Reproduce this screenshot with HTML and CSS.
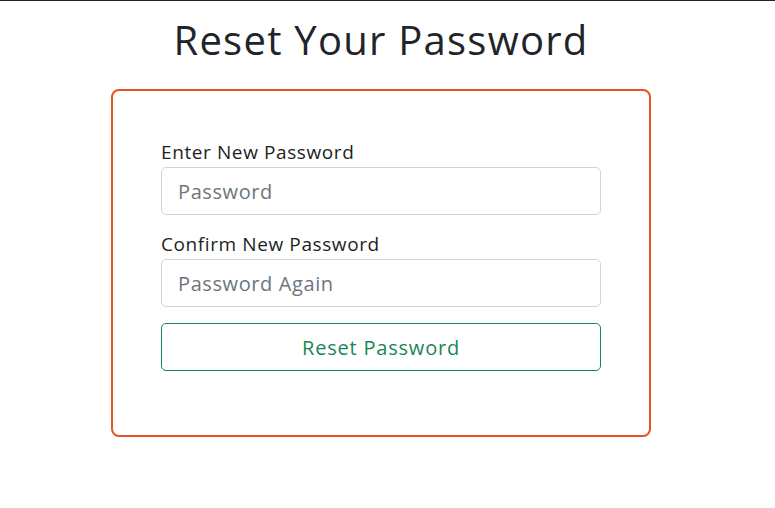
FILE: index.html
```html
<!DOCTYPE html>
<html>
<head>
<meta charset="utf-8">
<link rel="stylesheet" href="styles.css">
</head>
<body>
<div class="topline"></div>
<main class="wrap">
  <h1 class="title">Reset Your Password</h1>
  <form class="card">
    <label class="label" for="p1">Enter New Password</label>
    <input class="field" id="p1" type="password" placeholder="Password">
    <label class="label label-2" for="p2">Confirm New Password</label>
    <input class="field" id="p2" type="password" placeholder="Password Again">
    <button class="btn" type="button">Reset Password</button>
  </form>
</main>
</body>
</html>
```
FILE: styles.css
```css
* { box-sizing: border-box; }
html, body { margin: 0; padding: 0; background: #fff; }
body {
  font-family: "Open Sans", "Noto Sans", sans-serif;
  color: #212529;
}
.topline { height: 1px; background: #212529; }
.wrap {
  width: 540px;
  margin-left: 111px;
  display: flex;
  flex-direction: column;
}
.title {
  margin: 15px 0 25px;
  font-size: 40px;
  font-weight: 400;
  line-height: 48px;
  text-align: center;
  letter-spacing: 1.25px;
}
.card {
  border: 2px solid #e9531f;
  border-radius: 8px;
  padding: 51px 48px 64px;
  display: flex;
  flex-direction: column;
}
.label {
  font-size: 19px;
  font-weight: 500;
  line-height: 20px;
  letter-spacing: 0.6px;
  margin-bottom: 5px;
  color: #1c1f23;
}
.label-2 { margin-top: 19px; }
.field {
  height: 48px;
  border: 1px solid #ced4da;
  border-radius: 5px;
  padding: 0 16px;
  font: inherit;
  font-size: 20px;
  font-weight: 500;
  letter-spacing: 0.6px;
  color: #212529;
}
.field::placeholder { color: #6c757d; }
.btn {
  margin-top: 16px;
  height: 48px;
  border: 1px solid #198754;
  border-radius: 5px;
  background: #fff;
  color: #198754;
  font: inherit;
  font-size: 20px;
  font-weight: 500;
  letter-spacing: 0.8px;
}
```
